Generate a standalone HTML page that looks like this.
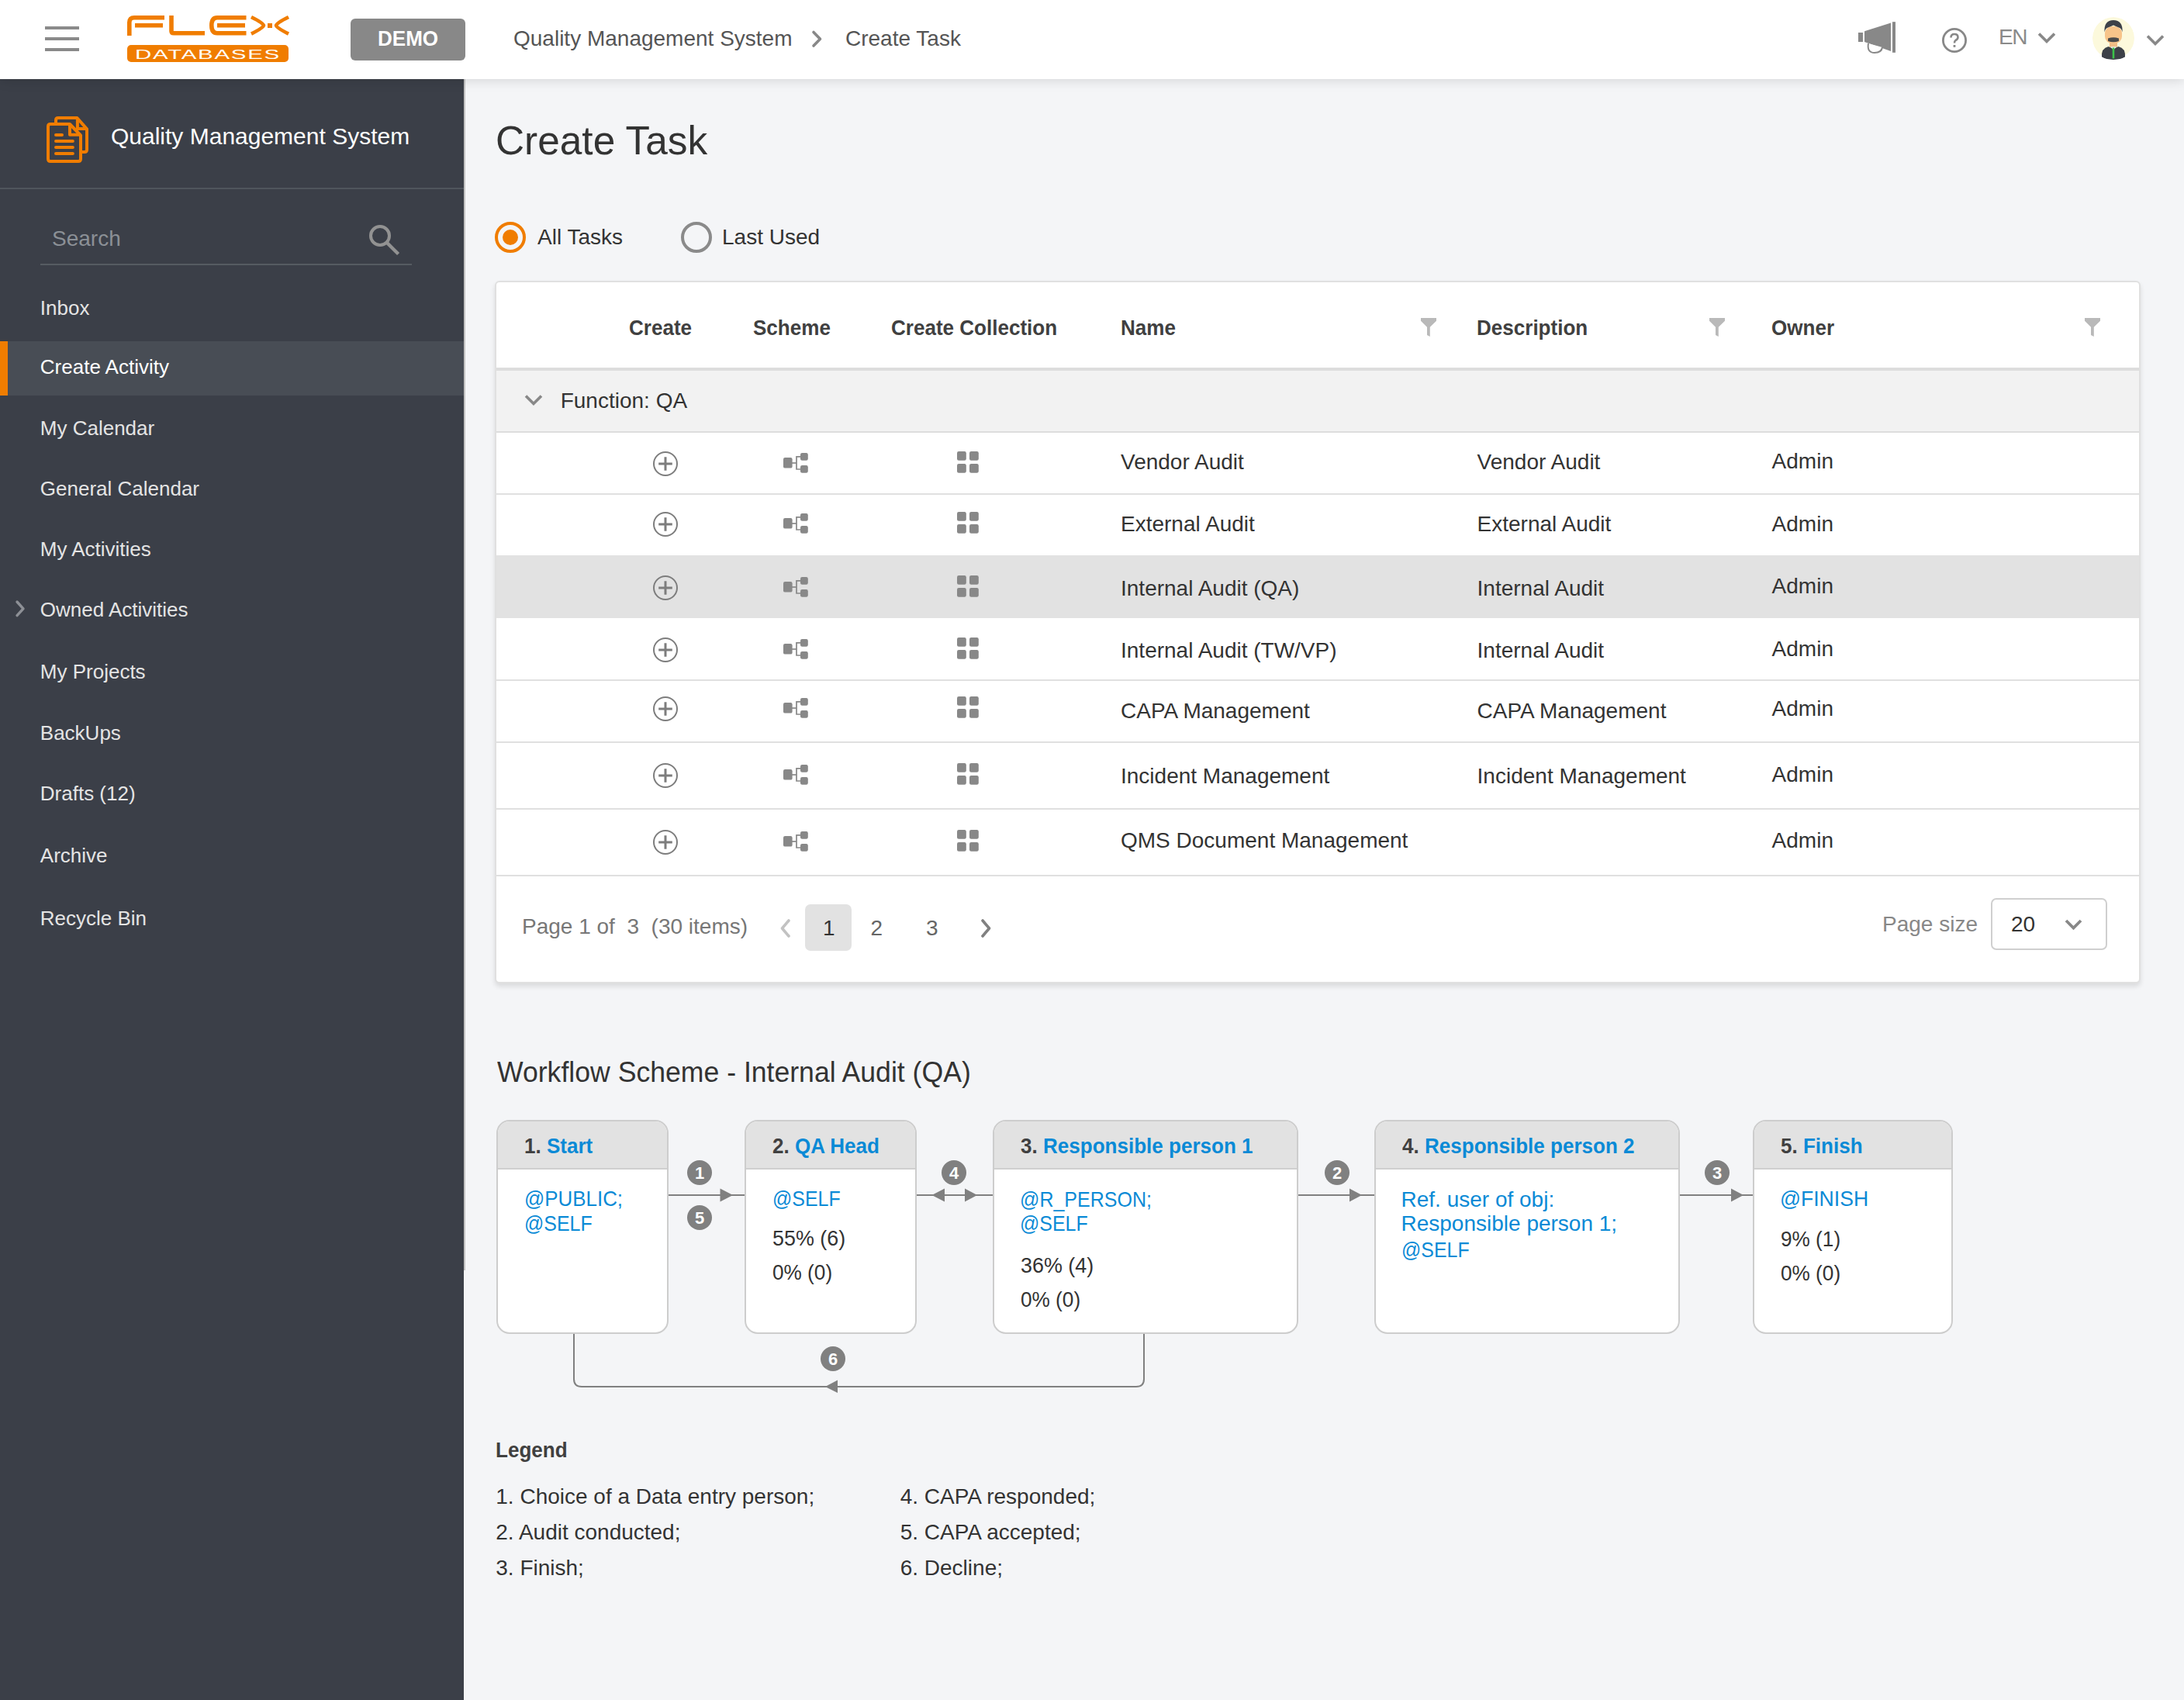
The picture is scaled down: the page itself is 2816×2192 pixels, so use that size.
<!DOCTYPE html>
<html><head><meta charset="utf-8"><title>Create Task</title>
<style>
html,body{margin:0;padding:0;}
body{width:2816px;height:2192px;overflow:hidden;position:relative;background:#f4f5f7;font-family:"Liberation Sans",sans-serif;}
.t{position:absolute;white-space:pre;}
.r{position:absolute;}
.s{position:absolute;overflow:visible;}
.badge{position:absolute;width:32px;height:32px;border-radius:50%;background:#808080;color:#fff;font-size:22px;font-weight:bold;line-height:33px;text-align:center;}
</style></head><body>
<div class="r" style="left:0px;top:0px;width:2816px;height:102px;background:#fff;z-index:5;box-shadow:0 2px 14px rgba(0,0,0,0.13);"></div>
<div class="r" style="left:58px;top:34px;width:44px;height:4px;background:#8a8a8a;z-index:6;"></div>
<div class="r" style="left:58px;top:48px;width:44px;height:4px;background:#8a8a8a;z-index:6;"></div>
<div class="r" style="left:58px;top:62px;width:44px;height:4px;background:#8a8a8a;z-index:6;"></div>
<svg class="s" style="left:164px;top:20px;z-index:6;" width="210" height="62" viewBox="0 0 210 62">
<g fill="none" stroke="#f07d00" stroke-width="5.6" stroke-linecap="butt">
<path d="M2.8 26 V9 Q2.8 2.8 9 2.8 H48"/>
<path d="M10 12.8 H46"/>
<path d="M57 0 V20 Q57 22.8 60 22.8 H100"/>
<path d="M153.5 2.8 H116 Q108.8 2.8 108.8 12.8 Q108.8 22.8 116 22.8 H153.5"/>
<path d="M116 12.8 H152"/>
<path d="M160 2 Q176 10 176 12.8 Q176 15.6 160 23.6" stroke-width="4.6"/>
<path d="M208 2 Q192 10 192 12.8 Q192 15.6 208 23.6" stroke-width="4.6"/>
</g>
<rect x="181" y="10" width="6" height="6" fill="#f07d00"/>
<rect x="0" y="38" width="208" height="22" rx="5" fill="#f07d00"/>
<text x="10" y="55.8" font-family="Liberation Sans" font-size="17" fill="#fff" textLength="188" lengthAdjust="spacingAndGlyphs" style="letter-spacing:1px">DATABASES</text>
</svg>
<div class="r" style="left:452px;top:24px;width:148px;height:54px;background:#888888;z-index:6;border-radius:6px;"></div>
<div class="t" style="left:487.0px;top:36.3px;font-size:28px;line-height:28px;color:#fff;font-weight:bold;transform:scaleX(0.93);transform-origin:0 0;z-index:7;">DEMO</div>
<div class="t" style="left:662.0px;top:36.3px;font-size:28px;line-height:28px;color:#555;font-weight:normal;z-index:6;">Quality Management System</div>
<svg class="s" style="left:1044px;top:36px;z-index:6;" width="22" height="28" viewBox="0 0 22 28"><path d="M5 5.5 L13.5 14.3 L5 23" fill="none" stroke="#888" stroke-width="3.6" stroke-linecap="round" stroke-linejoin="round"/></svg>
<div class="t" style="left:1090.0px;top:36.3px;font-size:28px;line-height:28px;color:#555;font-weight:normal;z-index:6;">Create Task</div>
<svg class="s" style="left:2396px;top:28px;z-index:6;" width="50" height="44" viewBox="0 0 50 44"><g fill="#888">
<rect x="0" y="14" width="6" height="12"/>
<path d="M8 12.3 L42 1.6 V38 L8 26 Z"/>
<rect x="44" y="0.2" width="4" height="39.6"/>
</g>
<path d="M13 28 Q11 40 21 40 Q30 40 31 33" fill="#fff" stroke="#888" stroke-width="2"/>
</svg>
<svg class="s" style="left:2504px;top:36px;z-index:6;" width="32" height="32" viewBox="0 0 32 32"><circle cx="16" cy="16" r="14.6" fill="none" stroke="#888" stroke-width="2.8"/>
<path d="M11.5 12.5 Q11.5 8 16 8 Q20.5 8 20.5 12 Q20.5 14.5 17.5 16 Q16 17 16 19.5" fill="none" stroke="#888" stroke-width="2.6"/>
<rect x="14.6" y="22" width="2.8" height="2.8" fill="#888"/></svg>
<div class="t" style="left:2577.0px;top:34.3px;font-size:28px;line-height:28px;color:#8a8a8a;font-weight:normal;z-index:6;letter-spacing:-1.5px;">EN</div>
<svg class="s" style="left:2626px;top:40px;z-index:6;" width="26" height="18" viewBox="0 0 26 18"><path d="M3 3.5 L13 13.5 L23 3.5" fill="none" stroke="#888" stroke-width="3.6"/></svg>
<svg class="s" style="left:2698px;top:22px;z-index:6;border-radius:27px;overflow:hidden;" width="54" height="56" viewBox="0 0 54 56"><circle cx="27" cy="27" r="27" fill="#fcf9dc"/>
<rect x="22" y="30" width="10" height="9" fill="#f2bd85"/>
<rect x="16" y="12" width="22" height="22" rx="9" fill="#f7c48a"/>
<path d="M15.5 19.5 Q14.5 4 27 4 Q39.5 4 38.5 19.5 Q37.5 14.5 34 13.5 Q30 12 27 10.5 Q24 12 20 13.5 Q16.5 14.5 15.5 19.5 Z" fill="#3d4148"/>
<path d="M20 27.5 Q27 25 34 27.5 V31 Q27 33.5 20 31 Z" fill="#4a4a4a"/>
<path d="M12 52 Q11 40 20.5 38 L27 41 L33.5 38 Q43 40 42 52 Q35 55 27 55 Q19 55 12 52 Z" fill="#3d4148"/>
<path d="M23 38.2 L27 42.5 L31 38.2 Z" fill="#e6ece6"/>
<rect x="25.7" y="39.5" width="2.6" height="14" fill="#3cc24a"/></svg>
<svg class="s" style="left:2766px;top:43px;z-index:6;" width="26" height="18" viewBox="0 0 26 18"><path d="M3 3.5 L13 13.5 L23 3.5" fill="none" stroke="#888" stroke-width="3.6"/></svg>
<div class="r" style="left:0px;top:102px;width:598px;height:2090px;background:#3b3f48;"></div>
<div class="r" style="left:598px;top:102px;width:2px;height:1536px;background:#c2c2c2;"></div>
<svg class="s" style="left:50px;top:140px;" width="80" height="80" viewBox="0 0 80 80"><g fill="none" stroke="#f07d00" stroke-width="4" stroke-linejoin="round">
<path d="M22 18 V15 Q22 12 25 12 H49.4 L62 26.4 V53 Q62 56 59 56 H54"/>
<path d="M49.9 12 V25.9 H62"/>
</g>
<path d="M15 20 H40 L54 34.5 V65 Q54 68 51 68 H15 Q12 68 12 65 V23 Q12 20 15 20 Z" fill="#3b3f48" stroke="#f07d00" stroke-width="4" stroke-linejoin="round"/>
<path d="M40 20 V33.8 H54" fill="none" stroke="#f07d00" stroke-width="4" stroke-linejoin="round"/>
<g stroke="#f07d00" stroke-width="4" stroke-linecap="round">
<path d="M22 33.9 H30"/><path d="M22 41.9 H43.9"/><path d="M22 49.9 H43.9"/><path d="M22 57.9 H43.9"/>
</g></svg>
<div class="t" style="left:143.0px;top:161.1px;font-size:30px;line-height:30px;color:#ffffff;font-weight:normal;">Quality Management System</div>
<div class="r" style="left:0px;top:242px;width:598px;height:2px;background:#50555d;"></div>
<div class="t" style="left:67.0px;top:294.3px;font-size:28px;line-height:28px;color:#8b9096;font-weight:normal;">Search</div>
<svg class="s" style="left:470px;top:284px;" width="50" height="50" viewBox="0 0 50 50"><circle cx="20" cy="20" r="12" fill="none" stroke="#929292" stroke-width="4"/><path d="M29 29 L42 42" stroke="#929292" stroke-width="4.4" stroke-linecap="square"/></svg>
<div class="r" style="left:52px;top:340px;width:479px;height:2px;background:#565b62;"></div>
<div class="r" style="left:0px;top:440px;width:598px;height:70px;background:#484d55;"></div>
<div class="r" style="left:0px;top:440px;width:10px;height:70px;background:#f07d00;"></div>
<div class="t" style="left:51.8px;top:384.0px;font-size:26px;line-height:26px;color:#e4e4e4;font-weight:normal;">Inbox</div>
<div class="t" style="left:51.8px;top:460.0px;font-size:26px;line-height:26px;color:#ffffff;font-weight:normal;">Create Activity</div>
<div class="t" style="left:51.8px;top:539.0px;font-size:26px;line-height:26px;color:#e4e4e4;font-weight:normal;">My Calendar</div>
<div class="t" style="left:51.8px;top:617.0px;font-size:26px;line-height:26px;color:#e4e4e4;font-weight:normal;">General Calendar</div>
<div class="t" style="left:51.8px;top:695.0px;font-size:26px;line-height:26px;color:#e4e4e4;font-weight:normal;">My Activities</div>
<div class="t" style="left:51.8px;top:773.0px;font-size:26px;line-height:26px;color:#e4e4e4;font-weight:normal;">Owned Activities</div>
<div class="t" style="left:51.8px;top:853.0px;font-size:26px;line-height:26px;color:#e4e4e4;font-weight:normal;">My Projects</div>
<div class="t" style="left:51.8px;top:932.0px;font-size:26px;line-height:26px;color:#e4e4e4;font-weight:normal;">BackUps</div>
<div class="t" style="left:51.8px;top:1010.0px;font-size:26px;line-height:26px;color:#e4e4e4;font-weight:normal;">Drafts (12)</div>
<div class="t" style="left:51.8px;top:1090.0px;font-size:26px;line-height:26px;color:#e4e4e4;font-weight:normal;">Archive</div>
<div class="t" style="left:51.8px;top:1171.0px;font-size:26px;line-height:26px;color:#e4e4e4;font-weight:normal;">Recycle Bin</div>
<svg class="s" style="left:16px;top:772px;" width="20" height="26" viewBox="0 0 20 26"><path d="M6 4 L14 12.8 L6 21.6" fill="none" stroke="#8d9096" stroke-width="3.4" stroke-linecap="round" stroke-linejoin="round"/></svg>
<div class="t" style="left:638.5px;top:155.0px;font-size:52px;line-height:52px;color:#333333;font-weight:normal;transform:scaleX(0.988);transform-origin:0 0;">Create Task</div>
<div class="r" style="left:638px;top:286px;width:40px;height:40px;border-radius:50%;box-sizing:border-box;border:4px solid #f07d00;"></div>
<div class="r" style="left:648px;top:296px;width:20px;height:20px;border-radius:50%;background:#f07d00;"></div>
<div class="t" style="left:693.0px;top:292.3px;font-size:28px;line-height:28px;color:#333333;font-weight:normal;">All Tasks</div>
<div class="r" style="left:878px;top:286px;width:40px;height:40px;border-radius:50%;box-sizing:border-box;border:4px solid #8a8a8a;"></div>
<div class="t" style="left:931.0px;top:292.3px;font-size:28px;line-height:28px;color:#333333;font-weight:normal;">Last Used</div>
<div class="r" style="left:638px;top:362px;width:2122px;height:906px;background:#fff;border-radius:6px;box-sizing:border-box;border:2px solid #e0e0e0;box-shadow:0 4px 6px rgba(0,0,0,0.11);"></div>
<div class="t" style="left:811.0px;top:408.8px;font-size:28px;line-height:28px;color:#404040;font-weight:bold;transform:scaleX(0.93);transform-origin:0 0;">Create</div>
<div class="t" style="left:971.0px;top:408.8px;font-size:28px;line-height:28px;color:#404040;font-weight:bold;transform:scaleX(0.93);transform-origin:0 0;">Scheme</div>
<div class="t" style="left:1148.6px;top:408.8px;font-size:28px;line-height:28px;color:#404040;font-weight:bold;transform:scaleX(0.93);transform-origin:0 0;">Create Collection</div>
<div class="t" style="left:1445.0px;top:408.8px;font-size:28px;line-height:28px;color:#404040;font-weight:bold;transform:scaleX(0.93);transform-origin:0 0;">Name</div>
<div class="t" style="left:1904.4px;top:408.8px;font-size:28px;line-height:28px;color:#404040;font-weight:bold;transform:scaleX(0.93);transform-origin:0 0;">Description</div>
<div class="t" style="left:2284.3px;top:408.8px;font-size:28px;line-height:28px;color:#404040;font-weight:bold;transform:scaleX(0.93);transform-origin:0 0;">Owner</div>
<svg class="s" style="left:1832px;top:410px;" width="20" height="24" viewBox="0 0 20 24"><path d="M0 0 H20 V3.8 L11.8 11.8 V24 L8 22 V11.8 L0 3.8 Z" fill="#b9b9b9"/></svg>
<svg class="s" style="left:2204px;top:410px;" width="20" height="24" viewBox="0 0 20 24"><path d="M0 0 H20 V3.8 L11.8 11.8 V24 L8 22 V11.8 L0 3.8 Z" fill="#b9b9b9"/></svg>
<svg class="s" style="left:2688px;top:410px;" width="20" height="24" viewBox="0 0 20 24"><path d="M0 0 H20 V3.8 L11.8 11.8 V24 L8 22 V11.8 L0 3.8 Z" fill="#b9b9b9"/></svg>
<div class="r" style="left:640px;top:474px;width:2118px;height:4px;background:#dddddd;"></div>
<div class="r" style="left:640px;top:478px;width:2118px;height:78px;background:#f2f2f2;"></div>
<div class="r" style="left:640px;top:556px;width:2118px;height:2px;background:#dddddd;"></div>
<svg class="s" style="left:674px;top:506px;" width="28" height="20" viewBox="0 0 28 20"><path d="M4 4.5 L14 14.5 L24 4.5" fill="none" stroke="#888" stroke-width="3.6"/></svg>
<div class="t" style="left:722.7px;top:502.7px;font-size:28px;line-height:28px;color:#333333;font-weight:normal;">Function: QA</div>
<div class="r" style="left:640px;top:636px;width:2118px;height:2px;background:#e0e0e0;"></div>
<svg class="s" style="left:842px;top:582px;" width="32" height="32" viewBox="0 0 32 32"><circle cx="16" cy="16" r="15" fill="none" stroke="#7d7d7d" stroke-width="2"/><path d="M7.2 16 H24.8 M16 7.2 V24.8" stroke="#7d7d7d" stroke-width="3"/></svg>
<svg class="s" style="left:1010px;top:584px;" width="32" height="26" viewBox="0 0 32 26"><g fill="#888"><rect x="0" y="6" width="11.6" height="13.6" rx="2.2"/><rect x="22" y="0" width="9.8" height="9.8" rx="2.2"/><rect x="22" y="16" width="9.8" height="9.8" rx="2.2"/></g>
<path d="M11 13 H17" stroke="#888" stroke-width="1.7"/><path d="M22.5 4.8 H17 V21 H22.5" fill="none" stroke="#888" stroke-width="1.7"/></svg>
<svg class="s" style="left:1234px;top:582px;" width="28" height="28" viewBox="0 0 28 28"><g fill="#888"><rect x="0" y="0" width="11.8" height="11.8" rx="2.2"/><rect x="16" y="0" width="11.8" height="11.8" rx="2.2"/><rect x="0" y="16" width="11.8" height="11.8" rx="2.2"/><rect x="16" y="16" width="11.8" height="11.8" rx="2.2"/></g></svg>
<div class="t" style="left:1445.0px;top:582.3px;font-size:28px;line-height:28px;color:#333333;font-weight:normal;">Vendor Audit</div>
<div class="t" style="left:1904.6px;top:582.3px;font-size:28px;line-height:28px;color:#333333;font-weight:normal;">Vendor Audit</div>
<div class="t" style="left:2284.6px;top:580.7px;font-size:28px;line-height:28px;color:#333333;font-weight:normal;">Admin</div>
<div class="r" style="left:640px;top:716px;width:2118px;height:2px;background:#e0e0e0;"></div>
<svg class="s" style="left:842px;top:660px;" width="32" height="32" viewBox="0 0 32 32"><circle cx="16" cy="16" r="15" fill="none" stroke="#7d7d7d" stroke-width="2"/><path d="M7.2 16 H24.8 M16 7.2 V24.8" stroke="#7d7d7d" stroke-width="3"/></svg>
<svg class="s" style="left:1010px;top:662px;" width="32" height="26" viewBox="0 0 32 26"><g fill="#888"><rect x="0" y="6" width="11.6" height="13.6" rx="2.2"/><rect x="22" y="0" width="9.8" height="9.8" rx="2.2"/><rect x="22" y="16" width="9.8" height="9.8" rx="2.2"/></g>
<path d="M11 13 H17" stroke="#888" stroke-width="1.7"/><path d="M22.5 4.8 H17 V21 H22.5" fill="none" stroke="#888" stroke-width="1.7"/></svg>
<svg class="s" style="left:1234px;top:660px;" width="28" height="28" viewBox="0 0 28 28"><g fill="#888"><rect x="0" y="0" width="11.8" height="11.8" rx="2.2"/><rect x="16" y="0" width="11.8" height="11.8" rx="2.2"/><rect x="0" y="16" width="11.8" height="11.8" rx="2.2"/><rect x="16" y="16" width="11.8" height="11.8" rx="2.2"/></g></svg>
<div class="t" style="left:1445.0px;top:662.3px;font-size:28px;line-height:28px;color:#333333;font-weight:normal;">External Audit</div>
<div class="t" style="left:1904.6px;top:662.3px;font-size:28px;line-height:28px;color:#333333;font-weight:normal;">External Audit</div>
<div class="t" style="left:2284.6px;top:662.3px;font-size:28px;line-height:28px;color:#333333;font-weight:normal;">Admin</div>
<div class="r" style="left:640px;top:716px;width:2118px;height:81px;background:#e2e2e2;"></div>
<svg class="s" style="left:842px;top:742px;" width="32" height="32" viewBox="0 0 32 32"><circle cx="16" cy="16" r="15" fill="none" stroke="#7d7d7d" stroke-width="2"/><path d="M7.2 16 H24.8 M16 7.2 V24.8" stroke="#7d7d7d" stroke-width="3"/></svg>
<svg class="s" style="left:1010px;top:744px;" width="32" height="26" viewBox="0 0 32 26"><g fill="#888"><rect x="0" y="6" width="11.6" height="13.6" rx="2.2"/><rect x="22" y="0" width="9.8" height="9.8" rx="2.2"/><rect x="22" y="16" width="9.8" height="9.8" rx="2.2"/></g>
<path d="M11 13 H17" stroke="#888" stroke-width="1.7"/><path d="M22.5 4.8 H17 V21 H22.5" fill="none" stroke="#888" stroke-width="1.7"/></svg>
<svg class="s" style="left:1234px;top:742px;" width="28" height="28" viewBox="0 0 28 28"><g fill="#888"><rect x="0" y="0" width="11.8" height="11.8" rx="2.2"/><rect x="16" y="0" width="11.8" height="11.8" rx="2.2"/><rect x="0" y="16" width="11.8" height="11.8" rx="2.2"/><rect x="16" y="16" width="11.8" height="11.8" rx="2.2"/></g></svg>
<div class="t" style="left:1445.0px;top:744.6px;font-size:28px;line-height:28px;color:#333333;font-weight:normal;">Internal Audit (QA)</div>
<div class="t" style="left:1904.6px;top:744.6px;font-size:28px;line-height:28px;color:#333333;font-weight:normal;">Internal Audit</div>
<div class="t" style="left:2284.6px;top:742.3px;font-size:28px;line-height:28px;color:#333333;font-weight:normal;">Admin</div>
<div class="r" style="left:640px;top:876px;width:2118px;height:2px;background:#e0e0e0;"></div>
<svg class="s" style="left:842px;top:822px;" width="32" height="32" viewBox="0 0 32 32"><circle cx="16" cy="16" r="15" fill="none" stroke="#7d7d7d" stroke-width="2"/><path d="M7.2 16 H24.8 M16 7.2 V24.8" stroke="#7d7d7d" stroke-width="3"/></svg>
<svg class="s" style="left:1010px;top:824px;" width="32" height="26" viewBox="0 0 32 26"><g fill="#888"><rect x="0" y="6" width="11.6" height="13.6" rx="2.2"/><rect x="22" y="0" width="9.8" height="9.8" rx="2.2"/><rect x="22" y="16" width="9.8" height="9.8" rx="2.2"/></g>
<path d="M11 13 H17" stroke="#888" stroke-width="1.7"/><path d="M22.5 4.8 H17 V21 H22.5" fill="none" stroke="#888" stroke-width="1.7"/></svg>
<svg class="s" style="left:1234px;top:822px;" width="28" height="28" viewBox="0 0 28 28"><g fill="#888"><rect x="0" y="0" width="11.8" height="11.8" rx="2.2"/><rect x="16" y="0" width="11.8" height="11.8" rx="2.2"/><rect x="0" y="16" width="11.8" height="11.8" rx="2.2"/><rect x="16" y="16" width="11.8" height="11.8" rx="2.2"/></g></svg>
<div class="t" style="left:1445.0px;top:824.8px;font-size:28px;line-height:28px;color:#333333;font-weight:normal;">Internal Audit (TW/VP)</div>
<div class="t" style="left:1904.6px;top:824.8px;font-size:28px;line-height:28px;color:#333333;font-weight:normal;">Internal Audit</div>
<div class="t" style="left:2284.6px;top:822.5px;font-size:28px;line-height:28px;color:#333333;font-weight:normal;">Admin</div>
<div class="r" style="left:640px;top:956px;width:2118px;height:2px;background:#e0e0e0;"></div>
<svg class="s" style="left:842px;top:898px;" width="32" height="32" viewBox="0 0 32 32"><circle cx="16" cy="16" r="15" fill="none" stroke="#7d7d7d" stroke-width="2"/><path d="M7.2 16 H24.8 M16 7.2 V24.8" stroke="#7d7d7d" stroke-width="3"/></svg>
<svg class="s" style="left:1010px;top:900px;" width="32" height="26" viewBox="0 0 32 26"><g fill="#888"><rect x="0" y="6" width="11.6" height="13.6" rx="2.2"/><rect x="22" y="0" width="9.8" height="9.8" rx="2.2"/><rect x="22" y="16" width="9.8" height="9.8" rx="2.2"/></g>
<path d="M11 13 H17" stroke="#888" stroke-width="1.7"/><path d="M22.5 4.8 H17 V21 H22.5" fill="none" stroke="#888" stroke-width="1.7"/></svg>
<svg class="s" style="left:1234px;top:898px;" width="28" height="28" viewBox="0 0 28 28"><g fill="#888"><rect x="0" y="0" width="11.8" height="11.8" rx="2.2"/><rect x="16" y="0" width="11.8" height="11.8" rx="2.2"/><rect x="0" y="16" width="11.8" height="11.8" rx="2.2"/><rect x="16" y="16" width="11.8" height="11.8" rx="2.2"/></g></svg>
<div class="t" style="left:1445.0px;top:902.6px;font-size:28px;line-height:28px;color:#333333;font-weight:normal;">CAPA Management</div>
<div class="t" style="left:1904.6px;top:902.6px;font-size:28px;line-height:28px;color:#333333;font-weight:normal;">CAPA Management</div>
<div class="t" style="left:2284.6px;top:900.3px;font-size:28px;line-height:28px;color:#333333;font-weight:normal;">Admin</div>
<div class="r" style="left:640px;top:1042px;width:2118px;height:2px;background:#e0e0e0;"></div>
<svg class="s" style="left:842px;top:984px;" width="32" height="32" viewBox="0 0 32 32"><circle cx="16" cy="16" r="15" fill="none" stroke="#7d7d7d" stroke-width="2"/><path d="M7.2 16 H24.8 M16 7.2 V24.8" stroke="#7d7d7d" stroke-width="3"/></svg>
<svg class="s" style="left:1010px;top:986px;" width="32" height="26" viewBox="0 0 32 26"><g fill="#888"><rect x="0" y="6" width="11.6" height="13.6" rx="2.2"/><rect x="22" y="0" width="9.8" height="9.8" rx="2.2"/><rect x="22" y="16" width="9.8" height="9.8" rx="2.2"/></g>
<path d="M11 13 H17" stroke="#888" stroke-width="1.7"/><path d="M22.5 4.8 H17 V21 H22.5" fill="none" stroke="#888" stroke-width="1.7"/></svg>
<svg class="s" style="left:1234px;top:984px;" width="28" height="28" viewBox="0 0 28 28"><g fill="#888"><rect x="0" y="0" width="11.8" height="11.8" rx="2.2"/><rect x="16" y="0" width="11.8" height="11.8" rx="2.2"/><rect x="0" y="16" width="11.8" height="11.8" rx="2.2"/><rect x="16" y="16" width="11.8" height="11.8" rx="2.2"/></g></svg>
<div class="t" style="left:1445.0px;top:987.3px;font-size:28px;line-height:28px;color:#333333;font-weight:normal;">Incident Management</div>
<div class="t" style="left:1904.6px;top:987.3px;font-size:28px;line-height:28px;color:#333333;font-weight:normal;">Incident Management</div>
<div class="t" style="left:2284.6px;top:985.0px;font-size:28px;line-height:28px;color:#333333;font-weight:normal;">Admin</div>
<div class="r" style="left:640px;top:1128px;width:2118px;height:2px;background:#e0e0e0;"></div>
<svg class="s" style="left:842px;top:1070px;" width="32" height="32" viewBox="0 0 32 32"><circle cx="16" cy="16" r="15" fill="none" stroke="#7d7d7d" stroke-width="2"/><path d="M7.2 16 H24.8 M16 7.2 V24.8" stroke="#7d7d7d" stroke-width="3"/></svg>
<svg class="s" style="left:1010px;top:1072px;" width="32" height="26" viewBox="0 0 32 26"><g fill="#888"><rect x="0" y="6" width="11.6" height="13.6" rx="2.2"/><rect x="22" y="0" width="9.8" height="9.8" rx="2.2"/><rect x="22" y="16" width="9.8" height="9.8" rx="2.2"/></g>
<path d="M11 13 H17" stroke="#888" stroke-width="1.7"/><path d="M22.5 4.8 H17 V21 H22.5" fill="none" stroke="#888" stroke-width="1.7"/></svg>
<svg class="s" style="left:1234px;top:1070px;" width="28" height="28" viewBox="0 0 28 28"><g fill="#888"><rect x="0" y="0" width="11.8" height="11.8" rx="2.2"/><rect x="16" y="0" width="11.8" height="11.8" rx="2.2"/><rect x="0" y="16" width="11.8" height="11.8" rx="2.2"/><rect x="16" y="16" width="11.8" height="11.8" rx="2.2"/></g></svg>
<div class="t" style="left:1445.0px;top:1069.7px;font-size:28px;line-height:28px;color:#333333;font-weight:normal;">QMS Document Management</div>
<div class="t" style="left:2284.6px;top:1069.7px;font-size:28px;line-height:28px;color:#333333;font-weight:normal;">Admin</div>
<div class="t" style="left:673.0px;top:1180.7px;font-size:28px;line-height:28px;color:#777777;font-weight:normal;">Page 1 of&nbsp; 3&nbsp; (30 items)</div>
<svg class="s" style="left:1000px;top:1182px;" width="24" height="30" viewBox="0 0 24 30"><path d="M17 5 L8.5 15 L17 25" fill="none" stroke="#c2c2c2" stroke-width="3.6" stroke-linecap="round" stroke-linejoin="round"/></svg>
<div class="r" style="left:1038px;top:1166px;width:60px;height:60px;background:#e2e2e2;border-radius:7px;"></div>
<div class="t" style="left:1061.0px;top:1182.5px;font-size:28px;line-height:28px;color:#333;font-weight:normal;">1</div>
<div class="t" style="left:1122.5px;top:1182.5px;font-size:28px;line-height:28px;color:#666;font-weight:normal;">2</div>
<div class="t" style="left:1194.0px;top:1182.5px;font-size:28px;line-height:28px;color:#666;font-weight:normal;">3</div>
<svg class="s" style="left:1260px;top:1182px;" width="24" height="30" viewBox="0 0 24 30"><path d="M7 5 L15.5 15 L7 25" fill="none" stroke="#808080" stroke-width="3.6" stroke-linecap="round" stroke-linejoin="round"/></svg>
<div class="t" style="left:2427.0px;top:1178.0px;font-size:28px;line-height:28px;color:#888888;font-weight:normal;">Page size</div>
<div class="r" style="left:2567px;top:1158px;width:150px;height:67px;box-sizing:border-box;border:2px solid #cfcfcf;border-radius:7px;background:#fff;"></div>
<div class="t" style="left:2593.0px;top:1178.3px;font-size:28px;line-height:28px;color:#333;font-weight:normal;">20</div>
<svg class="s" style="left:2660px;top:1183px;" width="28" height="18" viewBox="0 0 28 18"><path d="M4 4 L13.5 13.5 L23 4" fill="none" stroke="#888" stroke-width="3.8"/></svg>
<div class="t" style="left:640.5px;top:1364.9px;font-size:36px;line-height:36px;color:#333333;font-weight:normal;transform:scaleX(0.989);transform-origin:0 0;">Workflow Scheme - Internal Audit (QA)</div>
<div class="r" style="left:640px;top:1444px;width:222px;height:276px;box-sizing:border-box;border:2px solid #cdcdcd;border-radius:17px;background:#fff;overflow:hidden;"><div style="position:absolute;left:0;top:0;right:0;height:60px;background:#e2e2e2;border-bottom:2px solid #cfcfcf;"></div></div>
<div class="t" style="left:675.8px;top:1464.3px;font-size:28px;line-height:28px;color:#404040;font-weight:bold;transform:scaleX(0.93);transform-origin:0 0;">1. <span style="color:#0a8ad6">Start</span></div>
<div class="r" style="left:960px;top:1444px;width:222px;height:276px;box-sizing:border-box;border:2px solid #cdcdcd;border-radius:17px;background:#fff;overflow:hidden;"><div style="position:absolute;left:0;top:0;right:0;height:60px;background:#e2e2e2;border-bottom:2px solid #cfcfcf;"></div></div>
<div class="t" style="left:995.8px;top:1464.3px;font-size:28px;line-height:28px;color:#404040;font-weight:bold;transform:scaleX(0.93);transform-origin:0 0;">2. <span style="color:#0a8ad6">QA Head</span></div>
<div class="r" style="left:1280px;top:1444px;width:394px;height:276px;box-sizing:border-box;border:2px solid #cdcdcd;border-radius:17px;background:#fff;overflow:hidden;"><div style="position:absolute;left:0;top:0;right:0;height:60px;background:#e2e2e2;border-bottom:2px solid #cfcfcf;"></div></div>
<div class="t" style="left:1315.8px;top:1464.3px;font-size:28px;line-height:28px;color:#404040;font-weight:bold;transform:scaleX(0.93);transform-origin:0 0;">3. <span style="color:#0a8ad6">Responsible person 1</span></div>
<div class="r" style="left:1772px;top:1444px;width:394px;height:276px;box-sizing:border-box;border:2px solid #cdcdcd;border-radius:17px;background:#fff;overflow:hidden;"><div style="position:absolute;left:0;top:0;right:0;height:60px;background:#e2e2e2;border-bottom:2px solid #cfcfcf;"></div></div>
<div class="t" style="left:1807.8px;top:1464.3px;font-size:28px;line-height:28px;color:#404040;font-weight:bold;transform:scaleX(0.93);transform-origin:0 0;">4. <span style="color:#0a8ad6">Responsible person 2</span></div>
<div class="r" style="left:2260px;top:1444px;width:258px;height:276px;box-sizing:border-box;border:2px solid #cdcdcd;border-radius:17px;background:#fff;overflow:hidden;"><div style="position:absolute;left:0;top:0;right:0;height:60px;background:#e2e2e2;border-bottom:2px solid #cfcfcf;"></div></div>
<div class="t" style="left:2295.8px;top:1464.3px;font-size:28px;line-height:28px;color:#404040;font-weight:bold;transform:scaleX(0.93);transform-origin:0 0;">5. <span style="color:#0a8ad6">Finish</span></div>
<div class="t" style="left:676.0px;top:1532.3px;font-size:28px;line-height:28px;color:#0a8ad6;font-weight:normal;transform:scaleX(0.925);transform-origin:0 0;">@PUBLIC;</div>
<div class="t" style="left:676.0px;top:1564.0px;font-size:28px;line-height:28px;color:#0a8ad6;font-weight:normal;transform:scaleX(0.89);transform-origin:0 0;">@SELF</div>
<div class="t" style="left:995.5px;top:1532.3px;font-size:28px;line-height:28px;color:#0a8ad6;font-weight:normal;transform:scaleX(0.89);transform-origin:0 0;">@SELF</div>
<div class="t" style="left:996.0px;top:1582.5px;font-size:28px;line-height:28px;color:#333333;font-weight:normal;transform:scaleX(0.96);transform-origin:0 0;">55% (6)</div>
<div class="t" style="left:996.0px;top:1627.1px;font-size:28px;line-height:28px;color:#333333;font-weight:normal;transform:scaleX(0.935);transform-origin:0 0;">0% (0)</div>
<div class="t" style="left:1315.0px;top:1532.6px;font-size:28px;line-height:28px;color:#0a8ad6;font-weight:normal;transform:scaleX(0.893);transform-origin:0 0;">@R_PERSON;</div>
<div class="t" style="left:1315.0px;top:1563.9px;font-size:28px;line-height:28px;color:#0a8ad6;font-weight:normal;transform:scaleX(0.89);transform-origin:0 0;">@SELF</div>
<div class="t" style="left:1315.5px;top:1618.4px;font-size:28px;line-height:28px;color:#333333;font-weight:normal;transform:scaleX(0.96);transform-origin:0 0;">36% (4)</div>
<div class="t" style="left:1315.5px;top:1661.8px;font-size:28px;line-height:28px;color:#333333;font-weight:normal;transform:scaleX(0.935);transform-origin:0 0;">0% (0)</div>
<div class="t" style="left:1806.5px;top:1532.6px;font-size:28px;line-height:28px;color:#0a8ad6;font-weight:normal;">Ref. user of obj:</div>
<div class="t" style="left:1806.5px;top:1564.3px;font-size:28px;line-height:28px;color:#0a8ad6;font-weight:normal;">Responsible person 1;</div>
<div class="t" style="left:1806.5px;top:1597.8px;font-size:28px;line-height:28px;color:#0a8ad6;font-weight:normal;transform:scaleX(0.89);transform-origin:0 0;">@SELF</div>
<div class="t" style="left:2295.0px;top:1532.3px;font-size:28px;line-height:28px;color:#0a8ad6;font-weight:normal;transform:scaleX(0.949);transform-origin:0 0;">@FINISH</div>
<div class="t" style="left:2295.5px;top:1583.8px;font-size:28px;line-height:28px;color:#333333;font-weight:normal;transform:scaleX(0.935);transform-origin:0 0;">9% (1)</div>
<div class="t" style="left:2295.5px;top:1627.8px;font-size:28px;line-height:28px;color:#333333;font-weight:normal;transform:scaleX(0.935);transform-origin:0 0;">0% (0)</div>
<svg class="s" style="left:0;top:0" width="2816" height="2192" viewBox="0 0 2816 2192"><g stroke="#808080" stroke-width="2" fill="none">
<path d="M862 1541 H960"/><path d="M1182 1541 H1280"/><path d="M1674 1541 H1772"/><path d="M2166 1541 H2260"/>
<path d="M740 1720 V1778 Q740 1788 750 1788 H1465 Q1475 1788 1475 1778 V1720"/>
</g>
<g fill="#808080">
<path d="M928.5 1532.5 L945 1541 L928.5 1549.5 Z"/>
<path d="M1218 1532.5 L1201.5 1541 L1218 1549.5 Z"/>
<path d="M1244 1532.5 L1260 1541 L1244 1549.5 Z"/>
<path d="M1740 1532.5 L1756 1541 L1740 1549.5 Z"/>
<path d="M2232 1532.5 L2248 1541 L2232 1549.5 Z"/>
<path d="M1080 1779.5 L1064 1788 L1080 1796 Z"/>
</g></svg>
<div class="badge" style="left:886px;top:1496px;">1</div>
<div class="badge" style="left:886px;top:1554px;">5</div>
<div class="badge" style="left:1214px;top:1496px;">4</div>
<div class="badge" style="left:1708px;top:1496px;">2</div>
<div class="badge" style="left:2198px;top:1496px;">3</div>
<div class="badge" style="left:1058px;top:1736px;">6</div>
<div class="t" style="left:639.4px;top:1856.3px;font-size:28px;line-height:28px;color:#404040;font-weight:bold;transform:scaleX(0.93);transform-origin:0 0;">Legend</div>
<div class="t" style="left:639.3px;top:1916.3px;font-size:28px;line-height:28px;color:#333333;font-weight:normal;">1. Choice of a Data entry person;</div>
<div class="t" style="left:1160.7px;top:1916.3px;font-size:28px;line-height:28px;color:#333333;font-weight:normal;">4. CAPA responded;</div>
<div class="t" style="left:639.3px;top:1962.3px;font-size:28px;line-height:28px;color:#333333;font-weight:normal;">2. Audit conducted;</div>
<div class="t" style="left:1160.7px;top:1962.3px;font-size:28px;line-height:28px;color:#333333;font-weight:normal;">5. CAPA accepted;</div>
<div class="t" style="left:639.3px;top:2008.3px;font-size:28px;line-height:28px;color:#333333;font-weight:normal;">3. Finish;</div>
<div class="t" style="left:1160.7px;top:2008.3px;font-size:28px;line-height:28px;color:#333333;font-weight:normal;">6. Decline;</div>
</body></html>
